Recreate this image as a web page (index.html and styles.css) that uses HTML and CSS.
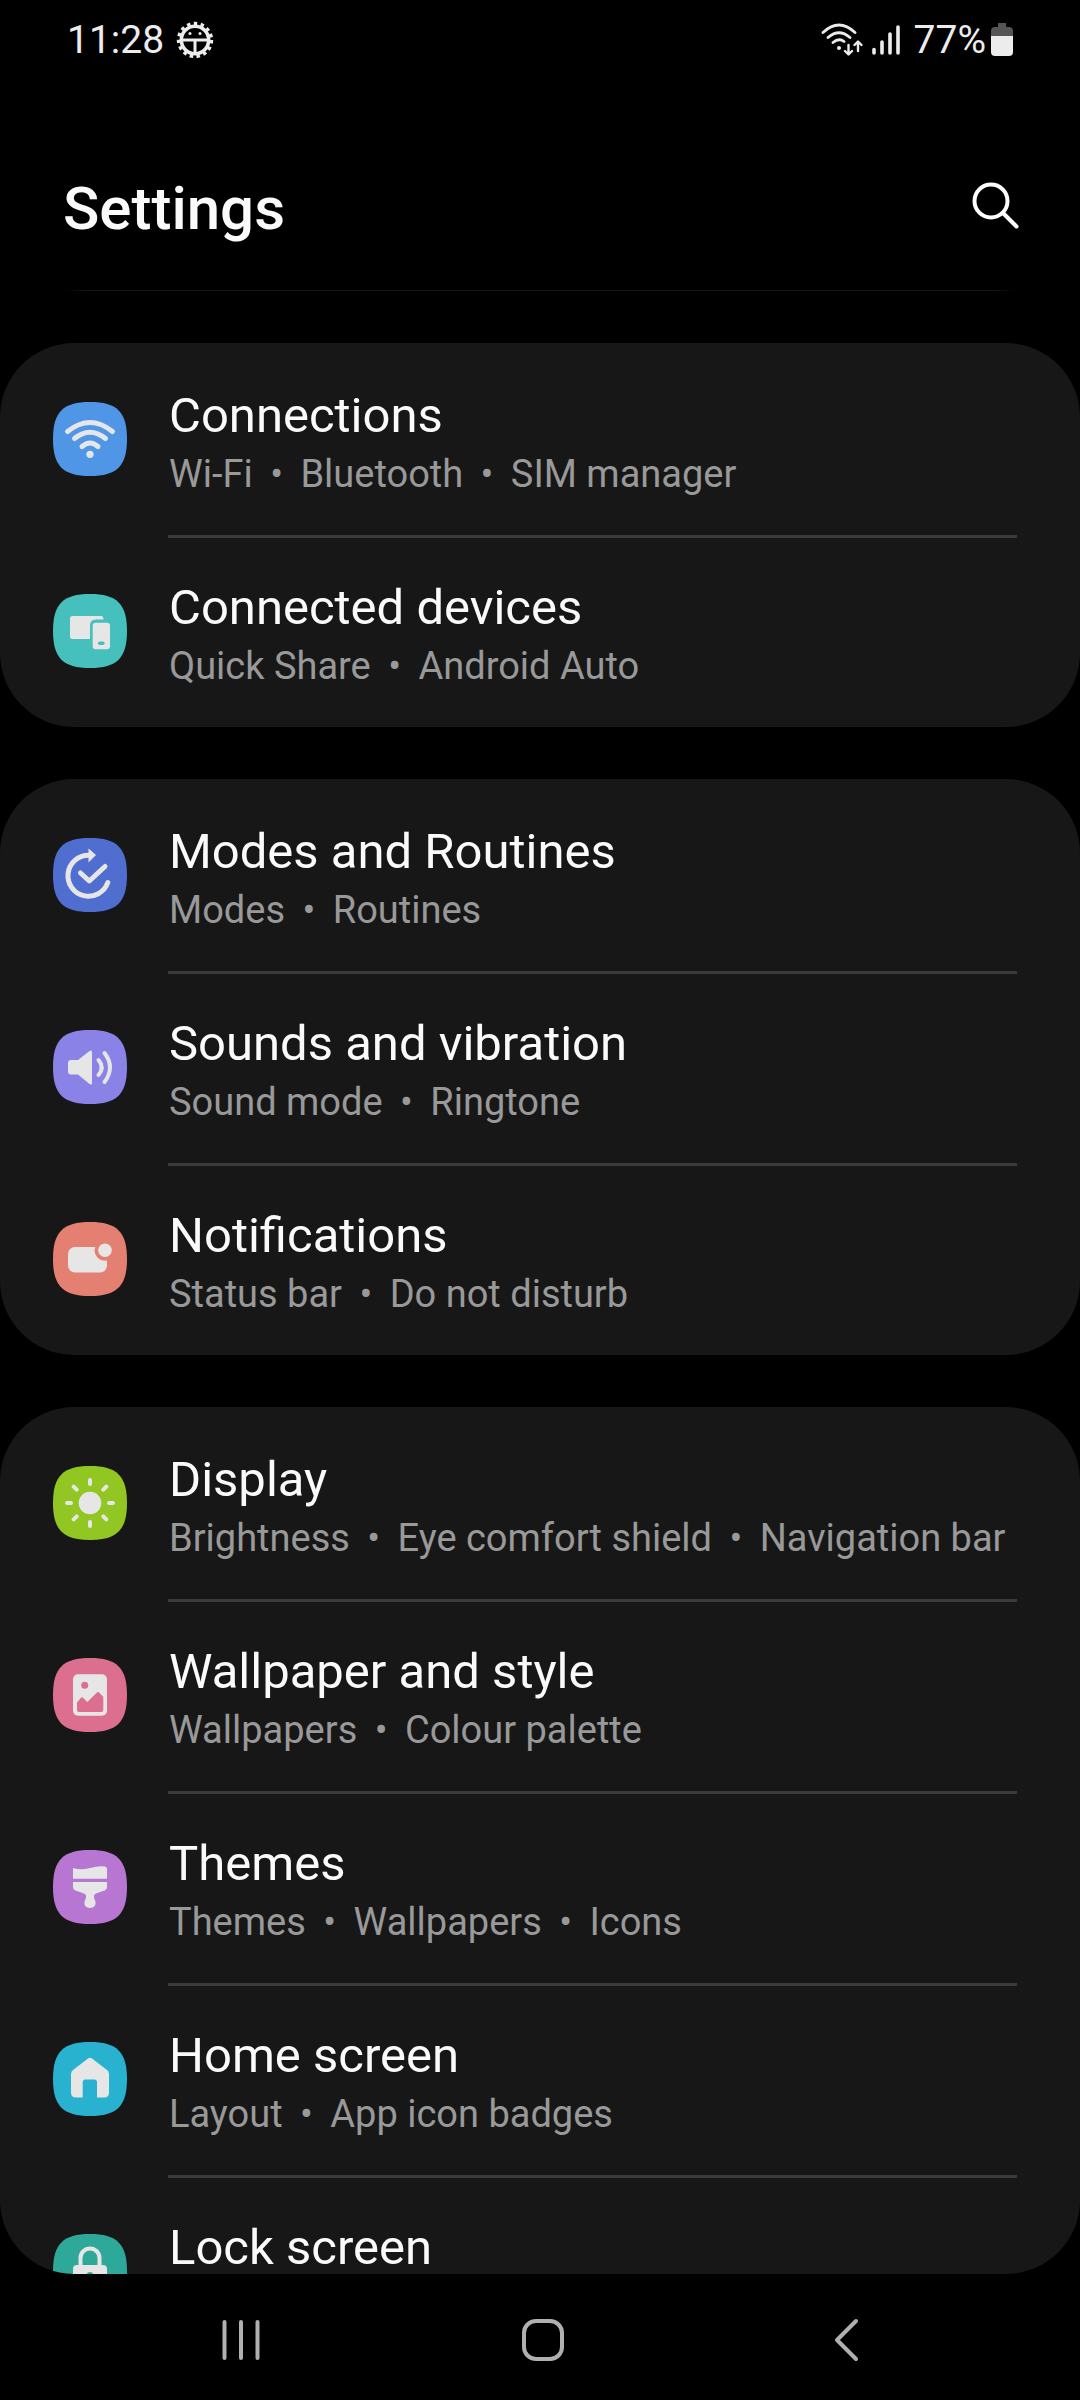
FILE: index.html
```
<!DOCTYPE html>
<html lang="en">
<head>
<meta charset="UTF-8">
<meta name="viewport" content="width=device-width, initial-scale=1.0">
<title>Settings</title>
<link rel="stylesheet" href="styles.css">
</head>
<body>
<div class="status-bar">
    <span>11:28</span>
    <svg class="gear" width="38" height="38" viewBox="0 0 38 38" fill="none" stroke="#ececec">
        <circle cx="19" cy="19" r="13.7" stroke-width="3.6"/>
        <circle cx="19" cy="19" r="16.2" stroke-width="4" stroke-dasharray="3.4 3.386"/>
        <path d="M5 19h28M19 19v13" stroke-width="3"/>
        <circle cx="14" cy="12.500" r="1.500" fill="#ececec" stroke="none"/>
        <circle cx="24" cy="12.500" r="1.500" fill="#ececec" stroke="none"/>
    </svg>
    <div class="status-right">
        <svg width="42" height="34" viewBox="0 0 42 34" fill="none" stroke="#ececec" stroke-width="2.8" stroke-linecap="round" stroke-linejoin="round">
            <path d="M2 9.500Q18 -5.500 34 9.500M7 14.500Q18 5 29 14.500M12 19.500Q18 14.500 23 18.500"/>
            <circle cx="18" cy="25" r="2" fill="#ececec" stroke="none"/>
            <path d="M27.500 22v9M24 28l3.500 3.500L31 28M37 28v-9M33.500 22l3.500-3.500 3.500 3.500" stroke-width="2.400"/>
        </svg>
        <svg width="30" height="34" viewBox="0 0 30 34" stroke="#ececec" stroke-width="3.600" stroke-linecap="round">
            <path d="M3 26.500v3.500M11 19v11M19 11v19M27 4v26"/>
        </svg>
        <span class="battery-text">77%</span>
        <svg width="22" height="34" viewBox="0 0 22 34">
            <path d="M7 0h8v4h3a4 4 0 0 1 4 4v5H0V8a4 4 0 0 1 4-4h3z" fill="#555"/>
            <path d="M0 13h22v16a4 4 0 0 1-4 4H4a4 4 0 0 1-4-4z" fill="#ececec"/>
        </svg>
    </div>
</div>

<header class="header">
    <h1>Settings</h1>
    <button type="button" class="search" aria-label="Search">
        <svg width="48" height="48" viewBox="0 0 48 48" fill="none" stroke="#fff" stroke-width="4" stroke-linecap="round">
            <circle cx="20" cy="20" r="16.500"/>
            <path d="M32 32l13.500 13.500"/>
        </svg>
    </button>
</header>

<main class="settings">
    <ul class="card">
        <li><a href="#" class="row">
            <svg class="icon blue" viewBox="0 0 74 74">
                <path class="bg" d="M37 0C64 0 74 10 74 37S64 74 37 74 0 64 0 37 10 0 37 0Z"/>
                <path class="line" d="M14.500 29.500Q37 11.500 59.500 29.500M21.500 36.500Q37 24 52.500 36.500M29 44.500Q37 37.500 45 44.500"/>
                <circle cx="37" cy="52.300" r="3.600"/>
            </svg>
            <div class="text">
                <div class="title">Connections</div>
                <div class="sub">Wi-Fi <span class="dot">•</span> Bluetooth <span class="dot">•</span> SIM manager</div>
            </div>
        </a></li>
        <li><a href="#" class="row">
            <svg class="icon teal" viewBox="0 0 74 74">
                <path class="bg" d="M37 0C64 0 74 10 74 37S64 74 37 74 0 64 0 37 10 0 37 0Z"/>
                <path d="M19.500 22H48q2.500 0 2.500 3.500H43q-6 0-6 6V45H19.500Q17 45 17 42.500v-18Q17 22 19.500 22z"/>
                <rect x="39.700" y="28.700" width="17.300" height="26.500" rx="3"/>
                <rect class="bg" x="45" y="47.500" width="6.600" height="3.400" rx="1.700"/>
            </svg>
            <div class="text">
                <div class="title">Connected devices</div>
                <div class="sub">Quick Share <span class="dot">•</span> Android Auto</div>
            </div>
        </a></li>
    </ul>

    <ul class="card">
        <li><a href="#" class="row">
            <svg class="icon indigo" viewBox="0 0 74 74">
                <path class="bg" d="M37 0C64 0 74 10 74 37S64 74 37 74 0 64 0 37 10 0 37 0Z"/>
                <path class="line" d="M36 17.200a20.500 20.500 0 1 0 18.800 27.300M27.500 35l8.800 8 15.700-14.500"/>
                <path d="M35.500 10.500l7.500 6.500-7.500 7.500z"/>
            </svg>
            <div class="text">
                <div class="title">Modes and Routines</div>
                <div class="sub">Modes <span class="dot">•</span> Routines</div>
            </div>
        </a></li>
        <li><a href="#" class="row">
            <svg class="icon violet" viewBox="0 0 74 74">
                <path class="bg" d="M37 0C64 0 74 10 74 37S64 74 37 74 0 64 0 37 10 0 37 0Z"/>
                <path d="M18 30h7l11.500-9q2.500-1.500 2.500 1v31q0 2.500-2.500 1L25 44.500h-7q-3 0-3-3V33q0-3 3-3z"/>
                <path class="line thin" d="M45.500 30q6.500 7.500 0 15M51.500 23q11 14.500 0 29"/>
            </svg>
            <div class="text">
                <div class="title">Sounds and vibration</div>
                <div class="sub">Sound mode <span class="dot">•</span> Ringtone</div>
            </div>
        </a></li>
        <li><a href="#" class="row">
            <svg class="icon coral" viewBox="0 0 74 74">
                <path class="bg" d="M37 0C64 0 74 10 74 37S64 74 37 74 0 64 0 37 10 0 37 0Z"/>
                <rect x="15" y="25" width="39" height="25.500" rx="7"/>
                <circle class="bg" cx="52" cy="28.300" r="10.500"/>
                <circle cx="52" cy="28.300" r="6.800"/>
            </svg>
            <div class="text">
                <div class="title">Notifications</div>
                <div class="sub">Status bar <span class="dot">•</span> Do not disturb</div>
            </div>
        </a></li>
    </ul>

    <ul class="card">
        <li><a href="#" class="row">
            <svg class="icon green" viewBox="0 0 74 74">
                <path class="bg" d="M37 0C64 0 74 10 74 37S64 74 37 74 0 64 0 37 10 0 37 0Z"/>
                <circle cx="37" cy="37" r="11.300"/>
                <path class="line thin" d="M37 14v4M37 56v4M14 37h4M56 37h4M20.700 20.700l3 3M50.300 50.300l3 3M20.700 53.300l3-3M50.300 23.700l3-3"/>
            </svg>
            <div class="text">
                <div class="title">Display</div>
                <div class="sub">Brightness <span class="dot">•</span> Eye comfort shield <span class="dot">•</span> Navigation bar</div>
            </div>
        </a></li>
        <li><a href="#" class="row">
            <svg class="icon pink" viewBox="0 0 74 74">
                <path class="bg" d="M37 0C64 0 74 10 74 37S64 74 37 74 0 64 0 37 10 0 37 0Z"/>
                <rect x="20" y="16.300" width="34" height="41.400" rx="5"/>
                <circle class="bg" cx="31.700" cy="27.300" r="3.500"/>
                <path class="bg" d="M24 44.500l4-4.800q1-1 2 0l4.300 4.300 9.700-9.500q1-1 2 0l4.300 4.300V52q0 2-2 2H26q-2 0-2-2z"/>
            </svg>
            <div class="text">
                <div class="title">Wallpaper and style</div>
                <div class="sub">Wallpapers <span class="dot">•</span> Colour palette</div>
            </div>
        </a></li>
        <li><a href="#" class="row">
            <svg class="icon purple" viewBox="0 0 74 74">
                <path class="bg" d="M37 0C64 0 74 10 74 37S64 74 37 74 0 64 0 37 10 0 37 0Z"/>
                <path d="M20 18q8 2.500 17 0t15-1.500q2 .5 2 2.500v9.700H20z"/>
                <path d="M20 32h34v5q0 3-4 4l-7 2.500q-2.500 1-2 4 .5 2 1.500 4 1 6.500-5.500 6.500t-5.500-6.500q1-2 1.500-4 .5-3-2-4L24 41q-4-1-4-4z"/>
            </svg>
            <div class="text">
                <div class="title">Themes</div>
                <div class="sub">Themes <span class="dot">•</span> Wallpapers <span class="dot">•</span> Icons</div>
            </div>
        </a></li>
        <li><a href="#" class="row">
            <svg class="icon cyan" viewBox="0 0 74 74">
                <path class="bg" d="M37 0C64 0 74 10 74 37S64 74 37 74 0 64 0 37 10 0 37 0Z"/>
                <path d="M35 16.500q2-1.500 4 0l15 11.500q2 1.500 2 4v18.500q0 5-5 5h-7V40q0-2.500-2.500-2.500h-9.300q-2.500 0-2.500 2.500v15.500H23q-5 0-5-5V32q0-2.500 2-4z"/>
            </svg>
            <div class="text">
                <div class="title">Home screen</div>
                <div class="sub">Layout <span class="dot">•</span> App icon badges</div>
            </div>
        </a></li>
        <li><a href="#" class="row">
            <svg class="icon jade" viewBox="0 0 74 74">
                <path class="bg" d="M37 0C64 0 74 10 74 37S64 74 37 74 0 64 0 37 10 0 37 0Z"/>
                <path class="line thin" d="M27.500 32v-8a9.500 9.500 0 0 1 19 0v8"/>
                <rect x="20" y="31" width="34" height="27" rx="4"/>
                <circle class="bg" cx="37" cy="41.500" r="3.500"/>
            </svg>
            <div class="text">
                <div class="title">Lock screen</div>
            </div>
        </a></li>
    </ul>
</main>

<nav class="nav-bar">
    <button type="button" aria-label="Recents">
        <svg width="44" height="44" viewBox="0 0 44 44" stroke="#b0b0b0" stroke-width="4" stroke-linecap="round">
            <path d="M5.500 4v36M22 4v36M38.500 4v36"/>
        </svg>
    </button>
    <button type="button" aria-label="Home">
        <svg width="44" height="44" viewBox="0 0 44 44" fill="none" stroke="#b0b0b0" stroke-width="4">
            <rect x="3" y="3" width="38" height="38" rx="12"/>
        </svg>
    </button>
    <button type="button" aria-label="Back">
        <svg width="44" height="44" viewBox="0 0 44 44" fill="none" stroke="#b0b0b0" stroke-width="4" stroke-linecap="round" stroke-linejoin="round">
            <path d="M33 3L14 22l19 19"/>
        </svg>
    </button>
</nav>
</body>
</html>
```

FILE: styles.css
```
* {
    box-sizing: border-box;
}

body {
    margin: 0;
    height: 100vh;
    display: flex;
    flex-direction: column;
    background-color: #000;
    color: #fafafa;
    font-family: Roboto, sans-serif;
    overflow: hidden;
}

svg {
    display: block;
    flex-shrink: 0;
}

button {
    border: none;
    padding: 0;
    background: none;
    cursor: pointer;
}

/* status bar */
.status-bar {
    display: flex;
    align-items: center;
    flex-shrink: 0;
    height: 80px;
    padding: 0 67px;
    font-size: 39px;
    color: #ececec;
}

.gear {
    margin-left: 12px;
}

.status-right {
    display: flex;
    align-items: center;
    margin-left: auto;
    gap: 8px;
}

.battery-text {
    margin: 0 -3px 0 5px;
}

/* title */
.header {
    display: flex;
    justify-content: space-between;
    flex-shrink: 0;
    height: 211px;
    padding: 92px 61px 0 63px;
    border-bottom: 1px solid;
    border-image: linear-gradient(to right, #000 6%, #161616 8%, #161616 92%, #000 94%) 1;
}

.header h1 {
    margin: 0;
    font-size: 60px;
    line-height: 74px;
    font-weight: 500;
}

.search {
    align-self: flex-start;
    padding-top: 9px;
}

/* list */
.settings {
    flex: 1;
    min-height: 0;
    margin-top: 52px;
    overflow: hidden;
    border-radius: 0 0 74px 74px;
}

.card {
    list-style: none;
    margin: 0 0 52px;
    padding: 0;
    background-color: #171717;
    border-radius: 74px;
    overflow: hidden;
}

.row {
    display: flex;
    align-items: center;
    height: 192px;
    padding: 0 63px 0 53px;
    gap: 41px;
    color: inherit;
    text-decoration: none;
}

.text {
    flex: 1;
    align-self: stretch;
    padding: 42px 0 0 1px;
    border-top: 3px solid transparent;
    white-space: nowrap;
}

li + li .text {
    border-top-color: #3a3a3a;
}

.title {
    font-size: 49px;
    line-height: 56px;
}

.sub {
    margin-top: 7px;
    font-size: 38px;
    line-height: 46px;
    color: #999;
}

.dot {
    margin: 0 8px;
}

.icon {
    width: 74px;
    height: 74px;
    fill: #e6e6e6;
}

.icon .line {
    fill: none;
    stroke: #e6e6e6;
    stroke-width: 5;
    stroke-linecap: round;
    stroke-linejoin: round;
}

.icon .thin {
    stroke-width: 4;
}

.blue .bg { fill: #5096e6; }
.teal .bg { fill: #46c0bc; }
.indigo .bg { fill: #506ed0; }
.violet .bg { fill: #8a82e6; }
.coral .bg { fill: #e48072; }
.green .bg { fill: #92c622; }
.pink .bg { fill: #dc6e90; }
.purple .bg { fill: #b676d2; }
.cyan .bg { fill: #28b2d0; }
.jade .bg { fill: #2ea898; }

/* bottom navigation */
.nav-bar {
    display: grid;
    grid-template-columns: repeat(3, 1fr);
    flex-shrink: 0;
    height: 126px;
    padding: 6px 84px 0 90px;
}

.nav-bar button {
    display: flex;
    align-items: center;
    justify-content: center;
}
```
